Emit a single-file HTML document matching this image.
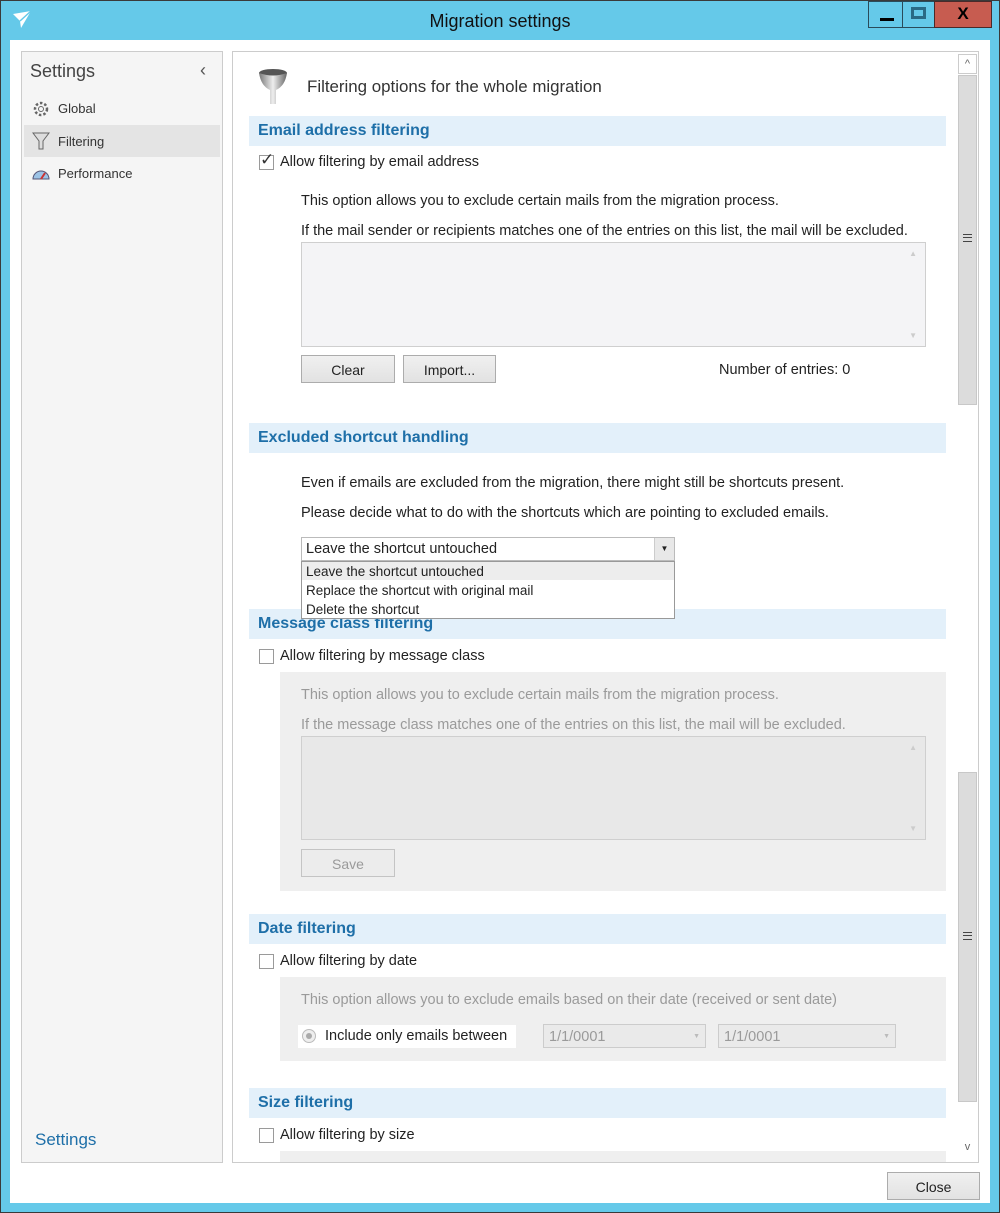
<!DOCTYPE html>
<html><head><meta charset="utf-8"><style>
*{margin:0;padding:0;box-sizing:border-box}
body{width:1000px;height:1213px;background:#65c9e9;font-family:"Liberation Sans",sans-serif;position:relative;overflow:hidden;color:#222}
.a{position:absolute}
.t{font-size:14.5px;white-space:nowrap}
.n{font-size:13px;white-space:nowrap}
.d{font-size:13.5px;white-space:nowrap}
.g{color:#9a9a9a}
.hd{position:absolute;left:249px;width:697px;height:30px;background:#e3f0fa;color:#1e6fa8;font-weight:bold;font-size:16px;padding:6px 0 0 9px}
.cb{position:absolute;width:15px;height:15px;border:1px solid #9a9a9a;background:#fff}
.btn{position:absolute;height:28px;border:1px solid #acacac;background:linear-gradient(#f0f0f0,#e2e2e2);font-size:14px;text-align:center;line-height:28px}
.list{position:absolute;border:1px solid #cfcfcf;background:#f4f4f6}
.gp{position:absolute;background:#efefef}
.hb{position:absolute;width:9px;height:8px;border-top:1px solid #444;border-bottom:1px solid #444}
.hb div{margin-top:2px;border-top:1px solid #444}
</style></head><body>
<div class="a" style="left:0;top:0;width:1000px;height:1213px;border:1px solid #3a3a3a"></div>
<svg class="a" style="left:12px;top:10px" width="20" height="20" viewBox="0 0 20 20"><path d="M1 4 L19 1 L9 18 L8 11 Z" fill="#fff"/><path d="M8 11 L19 1" stroke="#65c9e9" stroke-width="1.5"/></svg>
<div class="a" style="left:0;top:11px;width:1000px;text-align:center;font-size:18px;color:#111">Migration settings</div>
<div class="a" style="left:868px;top:1px;width:35px;height:27px;border:1px solid #2a4b5a"><div class="a" style="left:11px;top:16px;width:14px;height:3px;background:#000"></div></div>
<div class="a" style="left:902px;top:1px;width:33px;height:27px;border:1px solid #2a4b5a"><div class="a" style="left:8px;top:5px;width:15px;height:12px;border:3px solid #2a6a85"></div></div>
<div class="a" style="left:934px;top:1px;width:58px;height:27px;background:#c75c50;border:1px solid #4a2a2a;text-align:center;font-weight:bold;font-size:17px;line-height:24px;color:#000">X</div>
<div class="a" style="left:10px;top:40px;width:980px;height:1163px;background:#fff"></div>
<div class="a" style="left:21px;top:51px;width:202px;height:1112px;background:#f5f5f5;border:1px solid #ccc"></div>
<div class="a" style="left:30px;top:61px;font-size:18px;color:#444">Settings</div>
<div class="a" style="left:200px;top:60px;font-size:18px;color:#555">‹</div>
<svg class="a" style="left:32px;top:100px" width="18" height="18" viewBox="0 0 18 18"><circle cx="9" cy="9" r="6" fill="none" stroke="#666" stroke-width="2.5" stroke-dasharray="2.5 2"/><circle cx="9" cy="9" r="2.5" fill="none" stroke="#666"/></svg>
<div class="a n" style="left:58px;top:101px;color:#333">Global</div>
<div class="a" style="left:24px;top:125px;width:196px;height:32px;background:#e4e4e4"></div>
<svg class="a" style="left:32px;top:131px" width="18" height="20" viewBox="0 0 18 20"><path d="M1 2 H17 L11 10 V18 H7 V10 Z" fill="#ddd" stroke="#666"/></svg>
<div class="a n" style="left:58px;top:134px;color:#333">Filtering</div>
<svg class="a" style="left:31px;top:165px" width="20" height="16" viewBox="0 0 20 16"><path d="M2 14 A8 8 0 0 1 18 14 Z" fill="#9cc3e6" stroke="#557"/><path d="M10 14 L14 8" stroke="#c33" stroke-width="2"/></svg>
<div class="a n" style="left:58px;top:166px;color:#333">Performance</div>
<div class="a" style="left:35px;top:1130px;font-size:17px;color:#1e6fa8">Settings</div>
<div class="a" style="left:232px;top:51px;width:747px;height:1112px;border:1px solid #ccc;background:#fff"></div>
<div class="a" style="left:958px;top:54px;width:19px;height:20px;border:1px solid #ccc;text-align:center;font-size:11px;color:#666;line-height:18px">^</div>
<div class="a" style="left:958px;top:75px;width:19px;height:330px;background:#dcdcdc;border:1px solid #c8c8c8"></div>
<div class="a" style="left:958px;top:772px;width:19px;height:330px;background:#dcdcdc;border:1px solid #c8c8c8"></div>
<div class="hb" style="left:963px;top:234px"><div></div></div>
<div class="hb" style="left:963px;top:932px"><div></div></div>
<div class="a" style="left:958px;top:1141px;width:19px;height:20px;text-align:center;font-size:11px;color:#666">v</div>
<svg class="a" style="left:257px;top:68px" width="32" height="38" viewBox="0 0 32 38"><defs><linearGradient id="f" x1="0" x2="1"><stop offset="0" stop-color="#777"/><stop offset=".5" stop-color="#eee"/><stop offset="1" stop-color="#666"/></linearGradient></defs><ellipse cx="16" cy="5" rx="14" ry="4" fill="#555"/><path d="M2 5 Q4 18 13 22 V36 H19 V22 Q28 18 30 5 Q16 10 2 5Z" fill="url(#f)"/></svg>
<div class="a" style="left:307px;top:77px;font-size:16.9px;color:#333">Filtering options for the whole migration</div>

<div class="hd" style="top:116px">Email address filtering</div>
<div class="cb" style="left:259px;top:155px"></div>
<div class="a" style="left:260px;top:150px;font-size:17px;color:#333">✓</div>
<div class="a t" style="left:280px;top:154px">Allow filtering by email address</div>
<div class="a t" style="left:301px;top:193px">This option allows you to exclude certain mails from the migration process.</div>
<div class="a t" style="left:301px;top:223px">If the mail sender or recipients matches one of the entries on this list, the mail will be excluded.</div>
<div class="list" style="left:301px;top:242px;width:625px;height:105px"><div class="a" style="right:8px;top:6px;font-size:8px;color:#ccc">▲</div><div class="a" style="right:8px;bottom:6px;font-size:8px;color:#ccc">▼</div></div>
<div class="btn" style="left:301px;top:355px;width:94px">Clear</div>
<div class="btn" style="left:403px;top:355px;width:93px">Import...</div>
<div class="a t" style="left:719px;top:362px">Number of entries: 0</div>

<div class="hd" style="top:423px">Excluded shortcut handling</div>
<div class="a t" style="left:301px;top:475px">Even if emails are excluded from the migration, there might still be shortcuts present.</div>
<div class="a t" style="left:301px;top:505px">Please decide what to do with the shortcuts which are pointing to excluded emails.</div>

<div class="hd" style="top:609px">Message class filtering</div>
<div class="cb" style="left:259px;top:649px"></div>
<div class="a t" style="left:280px;top:648px">Allow filtering by message class</div>
<div class="gp" style="left:280px;top:672px;width:666px;height:219px"></div>
<div class="a t g" style="left:301px;top:687px">This option allows you to exclude certain mails from the migration process.</div>
<div class="a t g" style="left:301px;top:717px">If the message class matches one of the entries on this list, the mail will be excluded.</div>
<div class="list" style="left:301px;top:736px;width:625px;height:104px;background:#e8e8e8"><div class="a" style="right:8px;top:6px;font-size:8px;color:#ccc">▲</div><div class="a" style="right:8px;bottom:6px;font-size:8px;color:#ccc">▼</div></div>
<div class="btn g" style="left:301px;top:849px;width:94px;background:#ececec;border-color:#c4c4c4">Save</div>

<div class="a" style="left:301px;top:537px;width:374px;height:24px;border:1px solid #bbb;background:#fff"></div>
<div class="a t" style="left:306px;top:541px">Leave the shortcut untouched</div>
<div class="a" style="left:654px;top:538px;width:20px;height:22px;background:#e8e8e8;border-left:1px solid #ccc;font-size:8px;text-align:center;line-height:22px">▼</div>
<div class="a" style="left:301px;top:561px;width:374px;height:58px;border:1px solid #999;background:#fff"></div>
<div class="a" style="left:302px;top:562px;width:372px;height:18px;background:#ededed"></div>
<div class="a d" style="left:306px;top:564px">Leave the shortcut untouched</div>
<div class="a d" style="left:306px;top:583px">Replace the shortcut with original mail</div>
<div class="a d" style="left:306px;top:602px">Delete the shortcut</div>

<div class="hd" style="top:914px">Date filtering</div>
<div class="cb" style="left:259px;top:954px"></div>
<div class="a t" style="left:280px;top:953px">Allow filtering by date</div>
<div class="gp" style="left:280px;top:977px;width:666px;height:84px"></div>
<div class="a t g" style="left:301px;top:992px">This option allows you to exclude emails based on their date (received or sent date)</div>
<div class="a" style="left:298px;top:1025px;width:218px;height:23px;background:#fff"></div>
<div class="a" style="left:302px;top:1029px;width:14px;height:14px;border:1px solid #bbb;border-radius:50%;background:#eee"><div style="margin:3px;width:6px;height:6px;border-radius:50%;background:#aaa"></div></div>
<div class="a t" style="left:325px;top:1028px">Include only emails between</div>
<div class="a t g" style="left:543px;top:1024px;width:163px;height:24px;border:1px solid #ccc;background:#eaeaea;padding:4px 5px">1/1/0001<span style="float:right;font-size:7px;color:#bbb;margin-top:4px">▼</span></div>
<div class="a t g" style="left:718px;top:1024px;width:178px;height:24px;border:1px solid #ccc;background:#eaeaea;padding:4px 5px">1/1/0001<span style="float:right;font-size:7px;color:#bbb;margin-top:4px">▼</span></div>

<div class="hd" style="top:1088px">Size filtering</div>
<div class="cb" style="left:259px;top:1128px"></div>
<div class="a t" style="left:280px;top:1127px">Allow filtering by size</div>
<div class="gp" style="left:280px;top:1151px;width:666px;height:11px"></div>

<div class="btn" style="left:887px;top:1172px;width:93px">Close</div>
</body></html>
